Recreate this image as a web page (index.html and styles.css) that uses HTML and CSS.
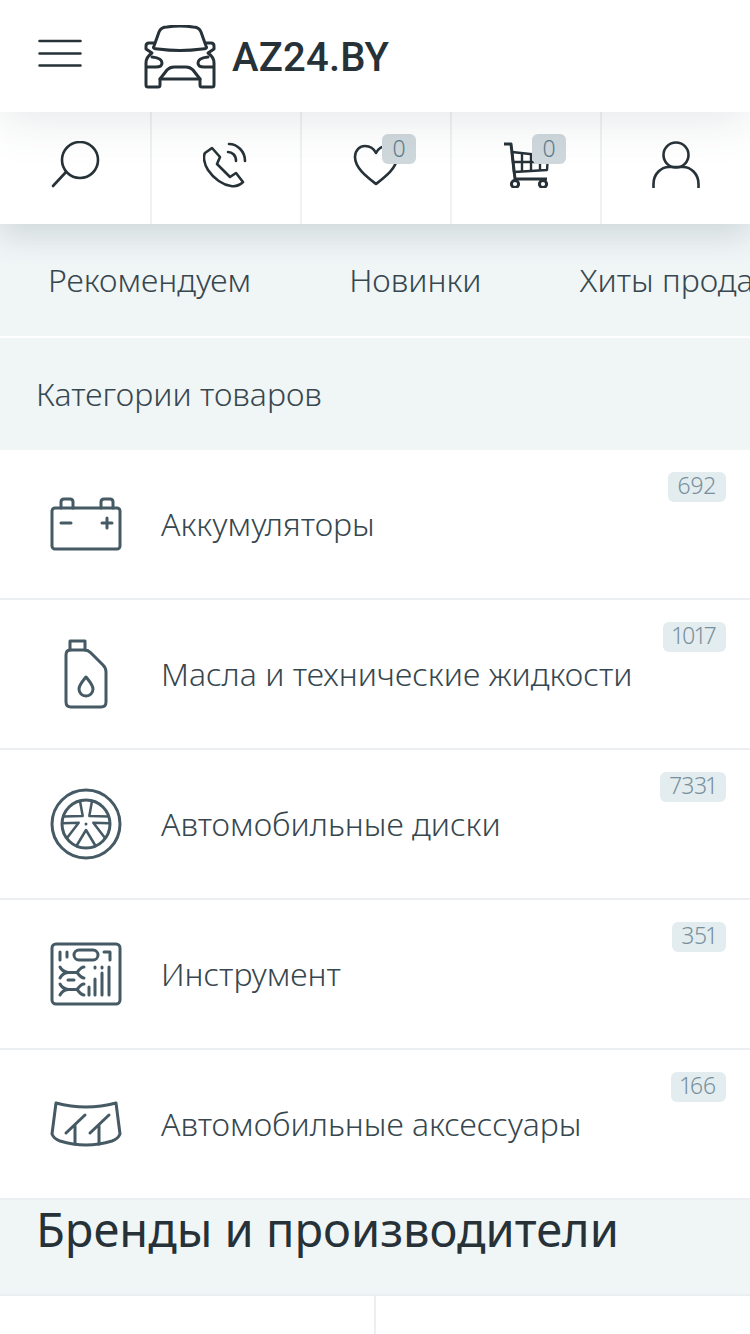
FILE: index.html
```html
<!DOCTYPE html>
<html lang="ru">
<head>
  <meta charset="UTF-8" />
  <meta name="viewport" content="width=device-width, initial-scale=1.0"/>
  <title>AZ24.BY</title>
  <link rel="stylesheet" href="styles.css">
</head>
<body>
  <header class="top">
    <button class="burger">
      <svg width="44" height="28" viewBox="0 0 44 28" fill="none" stroke="#263238" stroke-width="2.5" stroke-linecap="round">
        <path d="M1.500 2H42.500M1.500 14.500H42.500M1.500 26.500H42.500"/>
      </svg>
    </button>
    <a class="logo">
      <svg class="logo-car" width="72" height="64" viewBox="0 0 72 64" fill="none" stroke="#263238" stroke-width="3" stroke-linecap="round" stroke-linejoin="round">
        <path d="M10 21 15 7Q17 2 23 2 36 0 49 2 55 2 57 7L62 21Q64 24 58 24 36 27 14 24 8 24 10 21Z"/>
        <path d="M10 18H5Q2 18 2 21V24L8 28Q2 32 2 38V60Q2 62 4 62H14Q16 62 16 60V54H56V60Q56 62 58 62H68Q70 62 70 60V38Q70 32 64 28L70 24V21Q70 18 67 18H62"/>
        <path d="M3 42H12Q18 42 18 38 18 33 8 32"/>
        <path d="M69 42H60Q54 42 54 38 54 33 64 32"/>
        <path d="M16 54 23 45Q26 42 30 42H42Q46 42 49 45L56 54"/>
      </svg>
      <span class="logo-text">AZ24.BY</span>
    </a>
  </header>

  <nav class="tools">
    <a class="tool">
      <svg width="50" height="48" viewBox="0 0 50 48" fill="none" stroke="#263238" stroke-width="2.6" stroke-linecap="round">
        <circle cx="29" cy="19" r="18"/>
        <path d="M15 31 2 45"/>
      </svg>
    </a>
    <a class="tool">
      <svg width="46" height="46" viewBox="0 0 46 46" fill="none" stroke="#263238" stroke-width="2.6" stroke-linecap="round" stroke-linejoin="round">
        <path d="M9 6 2 11C0 14 1 22 5 28 11 37 20 43 28 44 34 45 38 42 40 40L33 31 27 35 14 22 17 15Z"/>
        <path d="M25 10C29 10 33 13 33 19"/>
        <path d="M26 2C34 2 42 9 42 19"/>
      </svg>
    </a>
    <a class="tool">
      <svg width="46" height="42" viewBox="0 0 46 42" fill="none" stroke="#263238" stroke-width="2.6" stroke-linejoin="round">
        <path d="M23 40C14 33 2 24 2 13 2 6 7 2 12 2 17 2 21 5 23 9 25 5 29 2 34 2 39 2 44 6 44 13 44 24 32 33 23 40Z"/>
      </svg>
      <span class="count">0</span>
    </a>
    <a class="tool">
      <svg width="46" height="46" viewBox="0 0 46 46" fill="none" stroke="#263238" stroke-width="2.4" stroke-linejoin="round">
        <path d="M1 2H8L12 37H44" stroke-width="3"/>
        <path d="M9 10 45 14 44 28 11 30Z"/>
        <path d="M10 20H45M19 10V30M28 11V29M37 12V29"/>
        <circle cx="12" cy="42" r="3.6" stroke-width="3"/>
        <circle cx="40" cy="42" r="3.6" stroke-width="3"/>
      </svg>
      <span class="count">0</span>
    </a>
    <a class="tool">
      <svg width="48" height="48" viewBox="0 0 48 48" fill="none" stroke="#263238" stroke-width="2.6">
        <circle cx="24" cy="14" r="12.5"/>
        <path d="M1.500 47V43C1.500 33 9 26 17 26H31C39 26 46.500 33 46.500 43V47"/>
      </svg>
    </a>
  </nav>

  <div class="tabs">
    <a class="tab">Рекомендуем</a>
    <a class="tab">Новинки</a>
    <a class="tab">Хиты продаж</a>
  </div>

  <h3 class="cat-title">Категории товаров</h3>

  <ul class="cats">
    <li class="cat">
      <svg class="cat-icon" width="72" height="54" viewBox="0 0 72 54" fill="none" stroke="#455a64" stroke-width="3" stroke-linecap="round" stroke-linejoin="round">
        <rect x="2" y="11" width="68" height="41" rx="3"/>
        <path d="M11 11V5Q11 2 14 2H20Q23 2 23 5V11M51 11V5Q51 2 54 2H60Q63 2 63 5V11"/>
        <path d="M11 26H21M52 26H62M57 21V31"/>
      </svg>
      <span class="cat-name">Аккумуляторы</span>
      <span class="num">692</span>
    </li>
    <li class="cat">
      <svg class="cat-icon" width="44" height="70" viewBox="0 0 44 70" fill="none" stroke="#455a64" stroke-width="3" stroke-linecap="round" stroke-linejoin="round">
        <path d="M6 11Q2 11 2 16V63Q2 68 7 68H37Q42 68 42 63V33Q42 29 39 26L27 14Q24 11 21 11Z"/>
        <path d="M6 11V2H21V11"/>
        <path d="M22 38 C18 43 15 46 15 50 15 54 18 57 22 57 26 57 29 54 29 50 29 46 26 43 22 38Z"/>
      </svg>
      <span class="cat-name">Масла и технические жидкости</span>
      <span class="num">1017</span>
    </li>
    <li class="cat">
      <svg class="cat-icon" width="72" height="72" viewBox="0 0 72 72" fill="none" stroke="#455a64" stroke-width="3" stroke-linecap="round" stroke-linejoin="round">
        <circle cx="36" cy="36" r="34"/>
        <circle cx="36" cy="36" r="24"/>
        <circle cx="36" cy="36" r="1.500" fill="#455a64" stroke="none"/>
        <g stroke-width="2.500">
          <path d="M27 57 36 42 45 57"/>
          <path d="M42 13 39.300 28 58.200 28.400"/>
          <path d="M30 13 32.700 28 13.800 28.400"/>
          <path d="M59 35.300 43.300 34.700 55 50"/>
          <path d="M13 35.300 28.700 34.700 17 50"/>
        </g>
      </svg>
      <span class="cat-name">Автомобильные диски</span>
      <span class="num">7331</span>
    </li>
    <li class="cat">
      <svg class="cat-icon" width="72" height="64" viewBox="0 0 72 64" fill="none" stroke="#455a64" stroke-width="3" stroke-linecap="round" stroke-linejoin="round">
        <rect x="2" y="2" width="68" height="60" rx="4"/>
        <path d="M10 10V18M17 10V15"/>
        <rect x="24" y="8" width="24" height="10" rx="5"/>
        <path d="M54 10H60V18"/>
        <path d="M10 25C12 29 15 30 18 30.500 15 31 12 32 10 36M34 25C31 25 29 28 27 30.500 29 33 31 36 34 36M18 30.500H27"/>
        <path d="M10 42C12 46 15 47 18 47.500 15 48 12 49 10 53M34 42C31 42 29 45 27 47.500 29 50 31 53 34 53M18 47.500H27"/>
        <path d="M18 38H24"/>
        <path d="M45 25V26M52 25V26M59 25V53M52 31V53M45 37V53M39 45V53"/>
      </svg>
      <span class="cat-name">Инструмент</span>
      <span class="num">351</span>
    </li>
    <li class="cat">
      <svg class="cat-icon" width="72" height="46" viewBox="0 0 72 46" fill="none" stroke="#455a64" stroke-width="3" stroke-linecap="round" stroke-linejoin="round">
        <path d="M6 2Q36 10 66 2L70 33Q68 38 62 40 36 48 10 40 4 38 2 33Z"/>
        <path d="M16 32 35 14M25 24V43M40 32 59 14M49 24V43"/>
      </svg>
      <span class="cat-name">Автомобильные аксессуары</span>
      <span class="num">166</span>
    </li>
  </ul>

  <h2 class="brands-title">Бренды и производители</h2>

  <div class="brands">
    <div class="brand"></div>
    <div class="brand"></div>
  </div>
</body>
</html>
```

FILE: styles.css
```css
* { margin: 0; padding: 0; box-sizing: border-box; }

html, body { height: 1334px; overflow: hidden; }

body {
  background: #fff;
  color: #263238;
  font-family: "Noto Sans", sans-serif;
  font-weight: 300;
}

/* Header */
.top {
  position: relative;
  z-index: 2;
  height: 112px;
  display: flex;
  align-items: center;
  background: #fff;
  box-shadow: 0 8px 48px rgba(69, 90, 100, 0.14);
}
.burger {
  display: flex;
  margin-left: 38px;
  margin-top: -7px;
  border: none;
  background: none;
}
.logo { display: flex; align-items: center; margin-left: 62px; margin-top: 2px; }
.logo-text {
  margin-left: 16px;
  font-family: Roboto, sans-serif;
  font-weight: 500;
  font-size: 40px;
  letter-spacing: 0.2px;
  color: #263238;
}

/* Toolbar */
.tools {
  position: relative;
  z-index: 1;
  height: 112px;
  display: flex;
  background: #fff;
  box-shadow: 0 10px 30px rgba(69, 90, 100, 0.2);
}
.tool {
  position: relative;
  flex: 0 0 150px;
  display: flex;
  align-items: center;
  justify-content: center;
  border-left: 2px solid #eef2f4;
  padding-bottom: 6px;
}
.tool:first-child { border-left-color: transparent; }
.count {
  position: absolute;
  top: 22px;
  left: 80px;
  width: 34px;
  height: 30px;
  border-radius: 6px;
  background: #cfd8dc;
  color: #607d8b;
  font-size: 23px;
  line-height: 28px;
  text-align: center;
}

/* Tabs */
.tabs {
  height: 112px;
  display: flex;
  align-items: center;
  gap: 98px;
  padding-left: 48px;
  padding-bottom: 2px;
  background: #f0f5f6;
  white-space: nowrap;
  overflow: hidden;
  font-size: 32px;
  color: #37474f;
}

.cat-title {
  height: 112px;
  margin-top: 2px;
  padding-left: 36px;
  background: #f0f5f6;
  font-size: 32px;
  font-weight: 300;
  line-height: 112px;
  color: #37474f;
}

/* Category list */
.cats { list-style: none; }
.cat {
  position: relative;
  height: 150px;
  display: flex;
  align-items: center;
  border-bottom: 2px solid #eceff1;
}
.cat-icon { position: absolute; left: 86px; top: 50%; transform: translate(-50%, -50%); }
.cat-name {
  margin-left: 161px;
  margin-bottom: 2px;
  font-size: 32px;
  color: #37474f;
}
.num {
  position: absolute;
  top: 22px;
  right: 24px;
  height: 30px;
  padding: 0 10px;
  border-radius: 6px;
  background: #e3ecef;
  color: #78909c;
  font-size: 23px;
  line-height: 27px;
  font-variant-numeric: proportional-nums;
}

/* Brands */
.brands-title {
  height: 96px;
  padding-left: 36px;
  background: #f0f5f6;
  border-bottom: 2px solid #eceff1;
  font-size: 47px;
  font-weight: 400;
  line-height: 58px;
  color: #263238;
}
.brands { display: flex; height: 60px; }
.brand { flex: 1; }
.brand:first-child { border-right: 2px solid #eceff1; }
```
